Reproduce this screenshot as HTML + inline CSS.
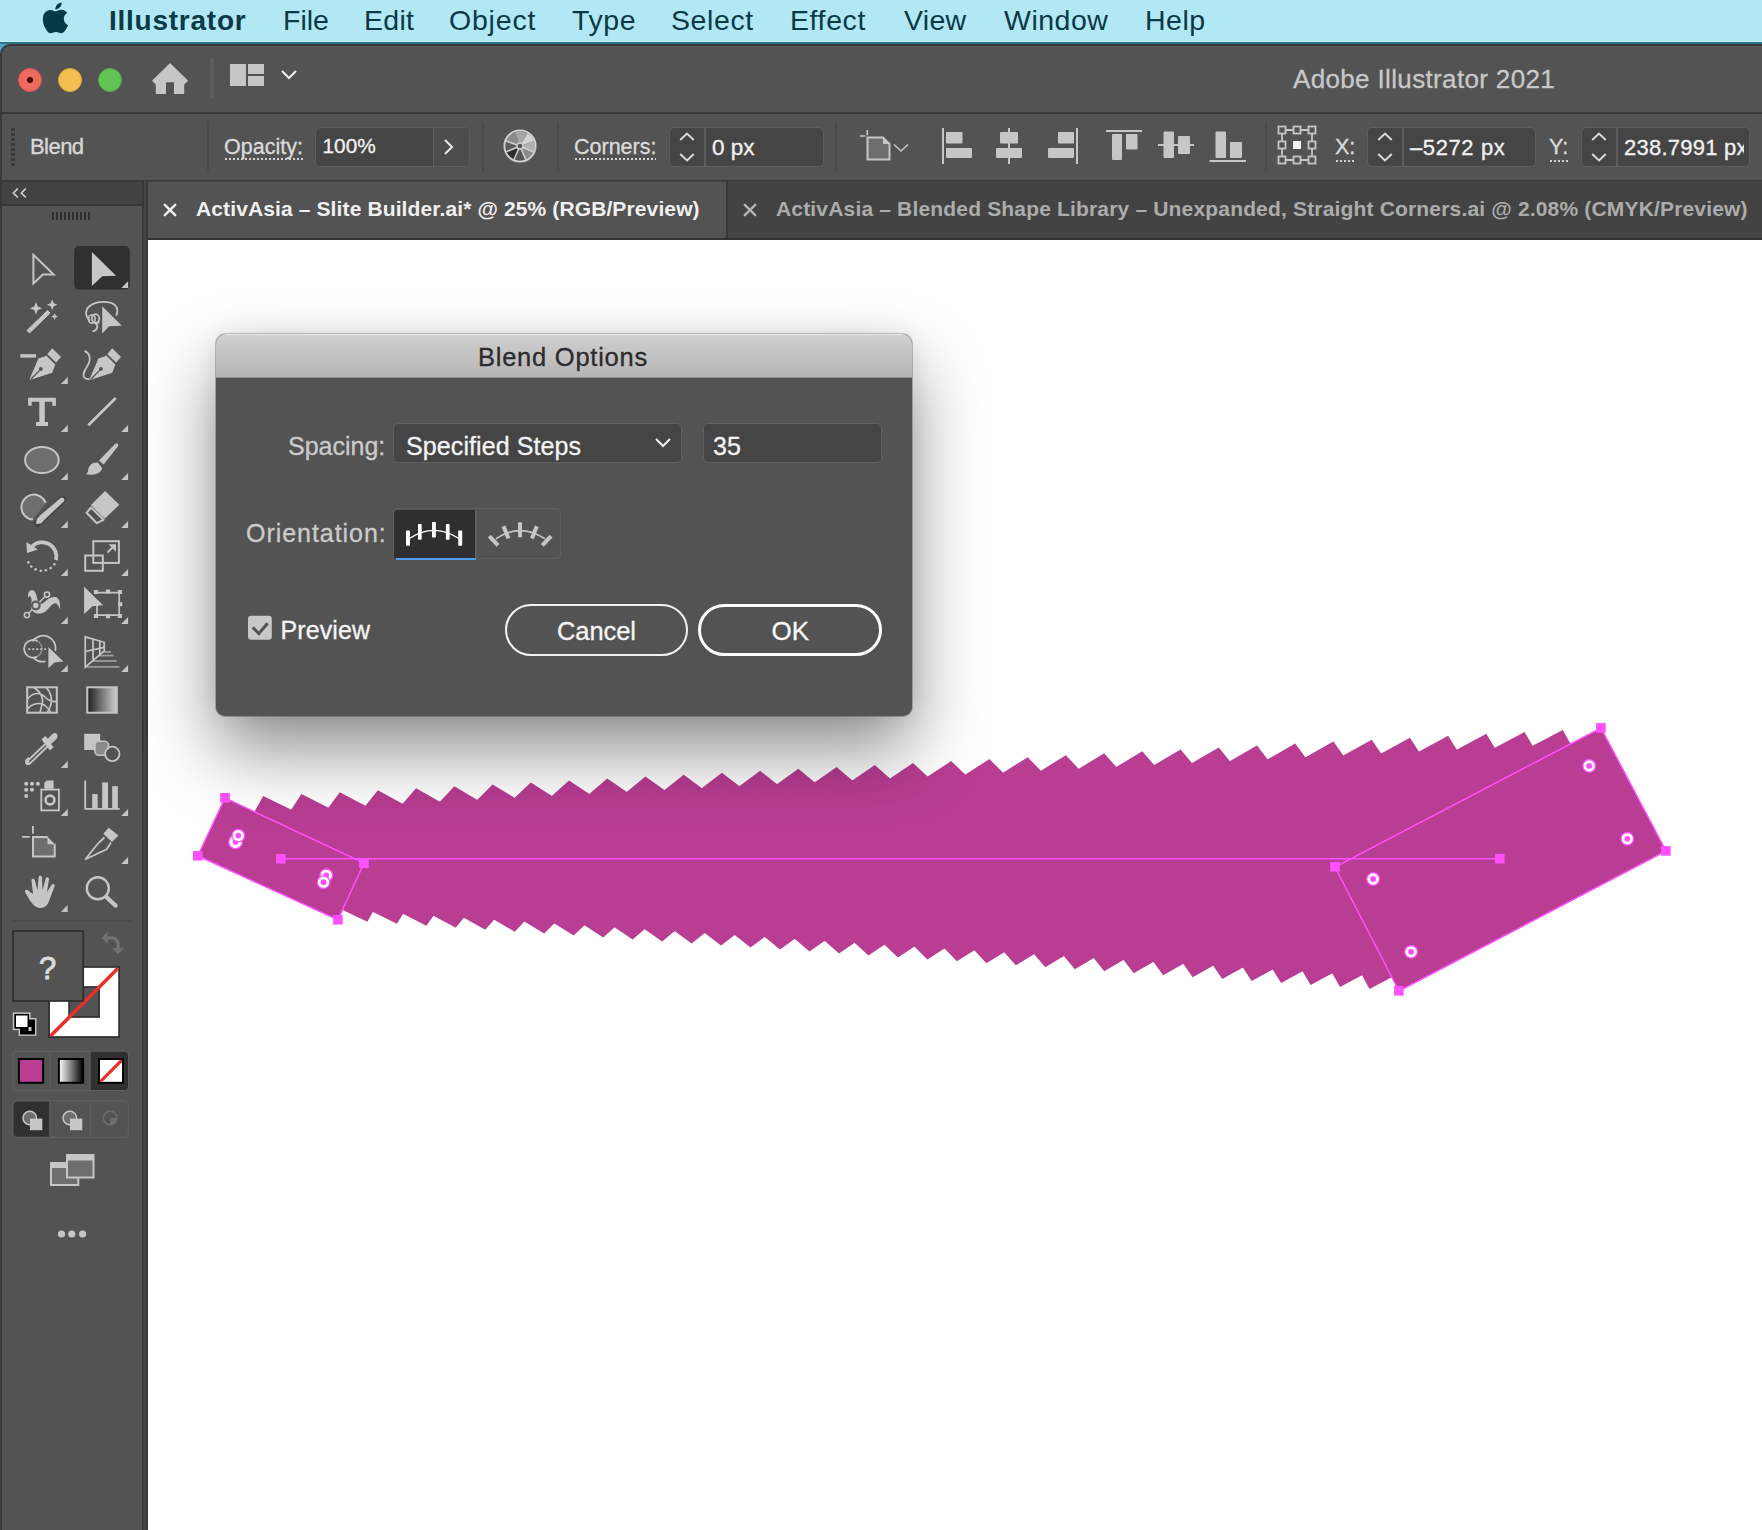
<!DOCTYPE html>
<html><head><meta charset="utf-8"><style>
*{margin:0;padding:0;box-sizing:border-box}
html,body{width:1762px;height:1530px;overflow:hidden;background:#fff;font-family:"Liberation Sans",sans-serif}
.a{position:absolute}
.t{position:absolute;white-space:pre;line-height:1}
#menubar{left:0;top:0;width:1762px;height:41px;background:#b1e8f4}
#menubar .t{color:#0b3946;font-size:28.5px;top:6px}
.lbl{color:#dcdcdc;font-size:21.5px;-webkit-text-stroke:0.3px currentColor}
.dl{position:absolute;height:2px;background:repeating-linear-gradient(90deg,#d4d4d4 0 2px,transparent 2px 4px)}
.inp{position:absolute;background:#454545;border:1.5px solid #5d5d5d;border-radius:5px}
.sep{position:absolute;width:2px;background:#4a4a4a}
</style></head><body>
<div id="menubar" class="a">
  <svg class="a" style="left:40.5px;top:2px" width="28.8" height="31.7" viewBox="1.5 -0.3 21 24.6"><path fill="#053a46" d="M12.152 6.896c-.948 0-2.415-1.078-3.96-1.04-2.04.027-3.91 1.183-4.961 3.014-2.117 3.675-.546 9.103 1.519 12.09 1.013 1.454 2.208 3.09 3.792 3.039 1.52-.065 2.09-.987 3.935-.987 1.831 0 2.35.987 3.96.948 1.637-.026 2.676-1.48 3.676-2.948 1.156-1.688 1.636-3.325 1.662-3.415-.039-.013-3.182-1.221-3.22-4.857-.026-3.04 2.48-4.494 2.597-4.559-1.429-2.09-3.623-2.324-4.39-2.376-2-.156-3.675 1.09-4.61 1.09zM15.53 3.83c.843-1.012 1.4-2.427 1.245-3.83-1.207.052-2.662.805-3.532 1.818-.78.896-1.454 2.338-1.273 3.714 1.338.104 2.715-.688 3.559-1.701"/></svg>
  <span class="t" style="left:109px;font-weight:700;font-size:28px;letter-spacing:0.75px;top:6.5px">Illustrator</span>
  <span class="t" style="left:283px">File</span>
  <span class="t" style="left:364px;letter-spacing:0.3px">Edit</span>
  <span class="t" style="left:449px;letter-spacing:0.8px">Object</span>
  <span class="t" style="left:572px;letter-spacing:0.6px">Type</span>
  <span class="t" style="left:671px;letter-spacing:0.6px">Select</span>
  <span class="t" style="left:790px;letter-spacing:0.6px">Effect</span>
  <span class="t" style="left:904px;letter-spacing:0.3px">View</span>
  <span class="t" style="left:1004px;letter-spacing:0.5px">Window</span>
  <span class="t" style="left:1145px;letter-spacing:0.5px">Help</span>
</div>
<div class="a" style="left:0;top:41px;width:1762px;height:1px;background:#bdf2fb"></div>
<div class="a" style="left:0;top:42px;width:1762px;height:2px;background:#2e7488"></div>
<div class="a" style="left:0;top:44px;width:20px;height:20px;background:#4aa6c6"></div>

<div class="a" style="left:0;top:44px;width:1762px;height:1486px;background:#3a3838;border-top-left-radius:10px"></div>
<div class="a" style="left:2px;top:46px;width:1760px;height:66px;background:#535353;border-top-left-radius:8px"></div>
<!-- traffic lights -->
<div class="a" style="left:18px;top:68px;width:24px;height:24px;border-radius:50%;background:#ec6a5f;border:1px solid #d8564b"></div>
<div class="a" style="left:27px;top:77px;width:6px;height:6px;border-radius:50%;background:#4e0202"></div>
<div class="a" style="left:58px;top:68px;width:24px;height:24px;border-radius:50%;background:#f4bf4f;border:1px solid #dca63a"></div>
<div class="a" style="left:98px;top:68px;width:24px;height:24px;border-radius:50%;background:#61c454;border:1px solid #51a940"></div>
<!-- home -->
<svg class="a" style="left:150px;top:60px" width="40" height="36" viewBox="150 60 40 36"><path fill="#c6c6c6" d="M170 63 L188.2 80.8 L184.2 84.4 L184.2 94 L174 94 L174 82.2 L166 82.2 L166 94 L155.8 94 L155.8 84.4 L152 80.8 Z"/></svg>
<div class="a" style="left:210px;top:58px;width:4px;height:40px;background:#5c5c5c"></div>
<!-- workspace icon -->
<div class="a" style="left:230px;top:64px;width:16px;height:22px;background:#c6c6c6"></div>
<div class="a" style="left:248px;top:64px;width:16px;height:10px;background:#c6c6c6"></div>
<div class="a" style="left:248px;top:76px;width:16px;height:10px;background:#c6c6c6"></div>
<svg class="a" style="left:280px;top:69px" width="18" height="12"><path d="M2 2 L9 9 L16 2" fill="none" stroke="#f0f0f0" stroke-width="2"/></svg>
<span class="t" style="left:1293px;top:66px;font-size:26px;color:#c8c8c8;letter-spacing:0.35px;-webkit-text-stroke:0.3px currentColor">Adobe Illustrator 2021</span>
<!-- control bar -->
<div class="a" style="left:2px;top:114px;width:1760px;height:66px;background:#535353"></div>
<div class="a" style="left:11px;top:128px;width:4px;height:3px;background:#3a3a3a"></div><div class="a" style="left:11px;top:133px;width:4px;height:3px;background:#3a3a3a"></div><div class="a" style="left:11px;top:138px;width:4px;height:3px;background:#3a3a3a"></div><div class="a" style="left:11px;top:143px;width:4px;height:3px;background:#3a3a3a"></div><div class="a" style="left:11px;top:148px;width:4px;height:3px;background:#3a3a3a"></div><div class="a" style="left:11px;top:153px;width:4px;height:3px;background:#3a3a3a"></div><div class="a" style="left:11px;top:158px;width:4px;height:3px;background:#3a3a3a"></div><div class="a" style="left:11px;top:163px;width:4px;height:3px;background:#3a3a3a"></div>
<span class="t lbl" style="left:30px;top:135.5px;font-size:22px;color:#d8d8d8;letter-spacing:-0.55px;-webkit-text-stroke:0.35px #d8d8d8">Blend</span>
<div class="sep" style="left:207px;top:122px;height:49px"></div>
<span class="t lbl" style="left:224px;top:137px">Opacity:</span><div class="dl" style="left:225px;top:158px;width:78px"></div>
<div class="inp" style="left:315px;top:127px;width:155px;height:40px"></div>
<div class="a" style="left:433px;top:128px;width:36px;height:38px;background:#4d4d4d;border-left:1.5px solid #5d5d5d;border-radius:0 4px 4px 0"></div>
<span class="t" style="-webkit-text-stroke:0.3px currentColor;left:322.5px;top:136px;font-size:20.8px;color:#f2f2f2">100%</span>
<svg class="a" style="left:440px;top:137px" width="16" height="20"><path d="M5 3 L12 10 L5 17" fill="none" stroke="#e8e8e8" stroke-width="2"/></svg>
<div class="sep" style="left:482px;top:122px;height:49px"></div>
<svg class="a" style="left:500px;top:126px" width="40" height="40" viewBox="-20 -20 40 40"><path d="M0 0 L13.52 6.02 A14.8 14.8 0 0 1 5.78 13.62 Z" fill="#8a8a8a"/><path d="M0 0 L5.78 13.62 A14.8 14.8 0 0 1 -6.02 13.52 Z" fill="#575757"/><path d="M0 0 L-6.02 13.52 A14.8 14.8 0 0 1 -13.62 5.78 Z" fill="#2c2c2c"/><path d="M0 0 L-13.62 5.78 A14.8 14.8 0 0 1 -13.91 -5.06 Z" fill="#5c5c5c"/><path d="M0 0 L-13.91 -5.06 A14.8 14.8 0 0 1 -5.06 -13.91 Z" fill="#8c8c8c"/><path d="M0 0 L-5.06 -13.91 A14.8 14.8 0 0 1 7.40 -12.82 Z" fill="#a6a6a6"/><path d="M0 0 L7.40 -12.82 A14.8 14.8 0 0 1 13.91 -5.06 Z" fill="#d2d2d2"/><path d="M0 0 L13.91 -5.06 A14.8 14.8 0 0 1 13.52 6.02 Z" fill="#b0b0b0"/><path d="M0 0 L13.52 6.02 M0 0 L5.78 13.62 M0 0 L-6.02 13.52 M0 0 L-13.62 5.78 M0 0 L-13.91 -5.06 " stroke="#cfcfcf" stroke-width="1.5"/><circle r="15.6" fill="none" stroke="#d0d0d0" stroke-width="1.9"/><circle r="3.1" fill="#555" stroke="#d0d0d0" stroke-width="1.5"/></svg>
<div class="sep" style="left:557px;top:122px;height:49px"></div>
<span class="t lbl" style="left:574px;top:137px">Corners:</span><div class="dl" style="left:575px;top:158px;width:81px"></div>
<div class="inp" style="left:669px;top:127px;width:155px;height:40px"></div>
<div class="a" style="left:704px;top:128px;width:1.5px;height:38px;background:#5d5d5d"></div>
<svg class="a" style="left:675px;top:130px" width="24" height="34"><path d="M5.2 10 L12 3.6 L18.8 10 M5.2 24 L12 30.4 L18.8 24" fill="none" stroke="#dcdcdc" stroke-width="1.9"/></svg>
<span class="t" style="-webkit-text-stroke:0.3px currentColor;left:712px;top:137px;font-size:22.5px;color:#f2f2f2">0 px</span>
<div class="sep" style="left:835px;top:122px;height:49px"></div>
<svg class="a" style="left:856px;top:127px" width="56" height="36" viewBox="856 127 56 36">
 <path d="M859.8 136 H865.2 M867.3 130 V135.5" stroke="#c6c6c6" stroke-width="1.6"/>
 <path d="M867.5 137.5 L883 137.5 L889.5 144 L889.5 159.5 L867.5 159.5 Z" fill="#6e6e6e" stroke="#c6c6c6" stroke-width="2"/>
 <path d="M883 137.5 L883 144 L889.5 144" fill="#c6c6c6"/>
 <path d="M894 144.5 L901 151 L908 144.5" fill="none" stroke="#c6c6c6" stroke-width="1.6"/>
</svg>
<svg class="a" style="left:930px;top:120px" width="330" height="50" viewBox="930 120 330 50" fill="#c6c6c6">
 <rect x="942" y="128" width="2" height="36"/><rect x="946" y="132" width="16.5" height="11.5" rx="1"/><rect x="946" y="148" width="26" height="10" rx="1"/>
 <rect x="1008" y="128" width="2" height="36"/><rect x="1000" y="132" width="18" height="11.5" rx="1"/><rect x="996" y="148" width="26" height="10" rx="1"/>
 <rect x="1076" y="128" width="2" height="36"/><rect x="1058" y="132" width="16" height="11.5" rx="1"/><rect x="1048" y="148" width="26" height="10" rx="1"/>
 <rect x="1106" y="130" width="36" height="2"/><rect x="1112" y="134" width="10" height="26" rx="1"/><rect x="1126" y="134" width="11.5" height="15.5" rx="1"/>
 <rect x="1158" y="144" width="36" height="2"/><rect x="1163.5" y="131.5" width="10.5" height="26.5" rx="1"/><rect x="1178" y="136" width="12" height="18" rx="1"/>
 <rect x="1209.5" y="160" width="36.5" height="2"/><rect x="1215.5" y="131.5" width="10.5" height="26.5" rx="1"/><rect x="1230" y="142" width="12" height="16" rx="1"/>
</svg>
<div class="sep" style="left:1265px;top:122px;height:49px"></div>
<svg class="a" style="left:1274px;top:122px" width="46" height="46" viewBox="1274 122 46 46">
 <g fill="none" stroke="#c6c6c6" stroke-width="1.8">
  <rect x="1278.5" y="126.5" width="7" height="7"/><rect x="1293.5" y="126.5" width="7" height="7"/><rect x="1308.5" y="126.5" width="7" height="7"/>
  <rect x="1278.5" y="141.5" width="7" height="7"/><rect x="1308.5" y="141.5" width="7" height="7"/>
  <rect x="1278.5" y="156.5" width="7" height="7"/><rect x="1293.5" y="156.5" width="7" height="7"/><rect x="1308.5" y="156.5" width="7" height="7"/>
  <path d="M1285.5 130 H1293.5 M1300.5 130 H1308.5 M1285.5 160 H1293.5 M1300.5 160 H1308.5 M1282 133.5 V141.5 M1282 148.5 V156.5 M1312 133.5 V141.5 M1312 148.5 V156.5"/>
 </g>
 <rect x="1293" y="141" width="8" height="8" fill="#f0f0f0"/>
</svg>
<span class="t lbl" style="left:1335px;top:137px">X:</span><div class="dl" style="left:1336px;top:160px;width:18px"></div>
<div class="inp" style="left:1367px;top:127px;width:169px;height:40px"></div>
<div class="a" style="left:1402px;top:128px;width:1.5px;height:38px;background:#5d5d5d"></div>
<svg class="a" style="left:1372.5px;top:130px" width="24" height="34"><path d="M5.2 10 L12 3.6 L18.8 10 M5.2 24 L12 30.4 L18.8 24" fill="none" stroke="#dcdcdc" stroke-width="1.9"/></svg>
<span class="t" style="-webkit-text-stroke:0.3px currentColor;left:1410px;top:137px;font-size:22px;letter-spacing:0.6px;color:#f2f2f2">–5272 px</span>
<span class="t lbl" style="left:1549px;top:137px">Y:</span><div class="dl" style="left:1550px;top:160px;width:18px"></div>
<div class="inp" style="left:1581px;top:127px;width:169px;height:40px"></div>
<div class="a" style="left:1616px;top:128px;width:1.5px;height:38px;background:#5d5d5d"></div>
<svg class="a" style="left:1586.5px;top:130px" width="24" height="34"><path d="M5.2 10 L12 3.6 L18.8 10 M5.2 24 L12 30.4 L18.8 24" fill="none" stroke="#dcdcdc" stroke-width="1.9"/></svg>
<div class="a" style="left:1620px;top:128px;width:124px;height:38px;overflow:hidden"><span class="t" style="-webkit-text-stroke:0.3px currentColor;left:4px;top:9px;font-size:22px;letter-spacing:0.25px;color:#f2f2f2">238.7991 px</span></div>

<!-- left panel -->
<div class="a" style="left:2px;top:182px;width:140px;height:22px;background:#434343"></div>
<svg class="a" style="left:0;top:180px" width="30" height="24" viewBox="0 180 30 24"><path d="M17.8 188.6 L13.3 193 L17.8 197.4 M25.8 188.6 L21.3 193 L25.8 197.4" fill="none" stroke="#d0d0d0" stroke-width="1.6"/></svg>
<div class="a" style="left:2px;top:206px;width:140px;height:1324px;background:#535353"></div>
<div class="a" style="left:52px;top:212px;width:38px;height:8px;background:repeating-linear-gradient(90deg,#2e2e2e 0 2px,transparent 2px 4px)"></div>
<div class="a" style="left:12px;top:920px;width:120px;height:1.5px;background:#4a4a4a"></div>
<svg class="a" style="left:0;top:0" width="148" height="1260" viewBox="0 0 148 1260">
<path d="M33.4 254.8 L33.4 283.4 L42.9 274.5 L53.6 274.5 Z" fill="none" stroke="#c6c6c6" stroke-width="2" stroke-linejoin="miter"/>
<rect x="74.2" y="246.1" width="55.6" height="43.4" rx="4.5" fill="#303030"/>
<path d="M91.9 252 L91.9 286.1 L102.2 276.3 L116.1 275.8 Z" fill="#c6c6c6"/>
<path d="M128.1 281.2 L128.1 288 L121.3 288 Z" fill="#c6c6c6"/>
<path d="M29.5 333 L27 330.4 L47.5 310.5 L50 313.1 Z" fill="#c6c6c6" stroke="#c6c6c6" stroke-width="1" stroke-linejoin="round"/>
<polygon points="36.00,302.10 37.75,306.55 42.20,308.30 37.75,310.05 36.00,314.50 34.25,310.05 29.80,308.30 34.25,306.55" fill="#c6c6c6"/>
<polygon points="52.20,299.30 53.73,303.17 57.60,304.70 53.73,306.23 52.20,310.10 50.67,306.23 46.80,304.70 50.67,303.17" fill="#c6c6c6"/>
<polygon points="54.60,312.90 55.62,315.48 58.20,316.50 55.62,317.52 54.60,320.10 53.58,317.52 51.00,316.50 53.58,315.48" fill="#c6c6c6"/>
<path d="M102.2 306.2 L102.2 333.6 L109 326.3 L121.8 325.8 Z" fill="#c6c6c6"/>
<path d="M116.2 315.6 C119 309.5 117 303.5 107.5 302.2 C98 301 89.5 304 86.8 309.5 C85 314 87 318.5 90 320.5 M95.2 323 C98.8 325.5 97.8 330.2 92.4 331.3 M94 322.7 H99.6" fill="none" stroke="#c6c6c6" stroke-width="1.8"/><ellipse cx="91.8" cy="319" rx="3.3" ry="4.2" fill="none" stroke="#c6c6c6" stroke-width="1.7"/><ellipse cx="95.6" cy="318.6" rx="3.7" ry="4.4" fill="none" stroke="#c6c6c6" stroke-width="1.7"/>
<rect x="20.3" y="354.2" width="15.7" height="3.4" fill="#c6c6c6"/>
<g transform="translate(0,0)">
<path d="M47.3 354.2 L52.2 348.3 L61 357.1 L56.1 362.5 Z" fill="#c6c6c6"/>
<path d="M38.4 358.6 L46.5 355.8 L55.3 364.5 L52.2 372.8 L31.5 379.5 Q29.5 379.8 30 378 Z" fill="#c6c6c6"/>
<circle cx="40.9" cy="368.9" r="1.9" fill="#535353"/>
<path d="M40.4 369.6 L31 379" stroke="#535353" stroke-width="1.3"/>
</g>
<path d="M67.8 377 L67.8 384 L60.8 384 Z" fill="#c6c6c6"/>
<g transform="translate(60,0)">
<path d="M47.3 354.2 L52.2 348.3 L61 357.1 L56.1 362.5 Z" fill="#c6c6c6"/>
<path d="M38.4 358.6 L46.5 355.8 L55.3 364.5 L52.2 372.8 L31.5 379.5 Q29.5 379.8 30 378 Z" fill="#c6c6c6"/>
<circle cx="40.9" cy="368.9" r="1.9" fill="#535353"/>
<path d="M40.4 369.6 L31 379" stroke="#535353" stroke-width="1.3"/>
</g>
<path d="M84.5 350.8 C90 353 91 359 88.5 364 C85 370 82 374 84 377 C85.5 379 88 379.3 89.6 379.2" fill="none" stroke="#c6c6c6" stroke-width="1.8"/>
<path d="M28.1 397.7 H55.9 V405.8 H52.3 V401.8 H44.8 V422 H48 V426 H36 V422 H39.3 V401.8 H31.7 V405.8 H28.1 Z" fill="#c6c6c6"/>
<path d="M67.8 425 L67.8 432 L60.8 432 Z" fill="#c6c6c6"/>
<path d="M89.3 424.3 L114.8 399.1" stroke="#c6c6c6" stroke-width="2.8" stroke-linecap="square"/>
<path d="M128.1 425 L128.1 432 L121.1 432 Z" fill="#c6c6c6"/>
<ellipse cx="41.9" cy="460" rx="16.8" ry="13" fill="#6e6e6e" stroke="#c6c6c6" stroke-width="2"/>
<path d="M67.8 473 L67.8 480 L60.8 480 Z" fill="#c6c6c6"/>
<path d="M99 460.6 L114.8 444.2 Q118.5 441.5 118.2 446 L103.6 464.6 Z" fill="#c6c6c6"/>
<path d="M97.8 462.6 C92.5 462 88.8 465.5 88.3 469.5 C88 472 87 473.5 86 474.3 C92 475.5 100.5 474.5 102.2 468.2 Z" fill="#c6c6c6"/>
<path d="M128.1 473 L128.1 480 L121.1 480 Z" fill="#c6c6c6"/>
<path d="M45.7 503 A12.5 12.5 0 1 0 33 519.6" fill="#6e6e6e" stroke="#c6c6c6" stroke-width="2"/>
<path d="M33 519.6 L45.7 503 L36 503 Z" fill="#6e6e6e"/>
<path d="M62.5 499.6 L37.5 523.2" stroke="#444" stroke-width="7.5" stroke-linecap="round"/>
<path d="M61.2 497.6 Q64.8 497.8 64.3 501 L45 519.2 L41 523.5 L36 524 L36.8 519.3 L40.5 515 Z" fill="#c6c6c6"/>
<path d="M67.8 521 L67.8 528 L60.8 528 Z" fill="#c6c6c6"/>
<path d="M105.1 490.9 L119.3 504.8 L104.6 518.8 L90.9 505.1 Z" fill="#c6c6c6"/>
<path d="M91 507.5 L103.5 519.8 L96.8 523.2 L86.6 512.8 Z" fill="none" stroke="#c6c6c6" stroke-width="2" stroke-linejoin="round"/>
<path d="M128.1 521 L128.1 528 L121.1 528 Z" fill="#c6c6c6"/>
<path d="M56 560 A14.3 14.3 0 0 0 32.2 546.3" fill="none" stroke="#c6c6c6" stroke-width="3.8"/>
<path d="M26.3 542.1 L27.1 552.9 L37.9 549.6 Z" fill="#c6c6c6"/>
<circle cx="28.4" cy="562.4" r="1.3" fill="#c6c6c6"/>
<circle cx="31.3" cy="566.5" r="1.3" fill="#c6c6c6"/>
<circle cx="35.6" cy="569.4" r="1.3" fill="#c6c6c6"/>
<circle cx="40.7" cy="570.7" r="1.3" fill="#c6c6c6"/>
<circle cx="45.9" cy="570.3" r="1.3" fill="#c6c6c6"/>
<circle cx="50.7" cy="568.1" r="1.3" fill="#c6c6c6"/>
<circle cx="54.3" cy="564.3" r="1.3" fill="#c6c6c6"/>
<path d="M67.8 569 L67.8 576 L60.8 576 Z" fill="#c6c6c6"/>
<rect x="93.3" y="541.2" width="25.6" height="21.7" fill="none" stroke="#c6c6c6" stroke-width="2"/>
<rect x="85.2" y="555.5" width="17.6" height="15.3" fill="none" stroke="#c6c6c6" stroke-width="2"/>
<path d="M107.5 552.5 L114 546" stroke="#c6c6c6" stroke-width="1.8"/><path d="M108.5 544.3 L116 544.3 L116 551.8 Z" fill="#c6c6c6"/>
<path d="M128.1 569 L128.1 576 L121.1 576 Z" fill="#c6c6c6"/>
<path d="M28.3 597.7 C27 592 30 589.5 33 590.3 C35.5 591 36.5 595 37.5 599.5 C38.5 603.5 41 605 44 602.5 C47.5 599 51 596.5 55 597 C59 597.5 60.5 602 60 609.3 C58.5 605.5 57 602.5 54.5 603.3 C51.5 604.5 49 608.5 46 611 C42.5 614 37 614.2 34.5 612.5 C31 610 30 606 31.5 602.5 C32 601 31.5 598.5 30.5 596.5 C29.5 595.5 29 596.5 28.3 597.7 Z" fill="#c6c6c6"/>
<path d="M27.9 614.1 L46 595.6" stroke="#c6c6c6" stroke-width="1.5"/>
<circle cx="26.9" cy="615.1" r="2.6" fill="#535353" stroke="#c6c6c6" stroke-width="1.6"/>
<circle cx="47" cy="594.6" r="2.6" fill="#535353" stroke="#c6c6c6" stroke-width="1.6"/>
<circle cx="35.8" cy="605.5" r="3.8" fill="#c6c6c6" stroke="#5a5a5a" stroke-width="2.2"/>
<path d="M67.8 617 L67.8 624 L60.8 624 Z" fill="#c6c6c6"/>
<path d="M97 592.6 H119.2 V615.1 H97 V605" fill="none" stroke="#c6c6c6" stroke-width="1.7"/>
<rect x="93.9" y="589.9" width="4.2" height="4" rx="0.6" fill="#c6c6c6"/>
<rect x="105.9" y="589.6" width="4.2" height="4" rx="0.6" fill="#c6c6c6"/>
<rect x="117.80000000000001" y="589.9" width="4.2" height="4" rx="0.6" fill="#c6c6c6"/>
<rect x="118.10000000000001" y="602.2" width="4.2" height="4" rx="0.6" fill="#c6c6c6"/>
<rect x="93.9" y="614.1" width="4.2" height="4" rx="0.6" fill="#c6c6c6"/>
<rect x="105.9" y="614.3" width="4.2" height="4" rx="0.6" fill="#c6c6c6"/>
<rect x="117.80000000000001" y="614.1" width="4.2" height="4" rx="0.6" fill="#c6c6c6"/>
<path d="M84.1 586.8 L84.1 614.1 L92.6 606.2 L103.2 605.2 Z" fill="#c6c6c6"/>
<path d="M128.1 617 L128.1 624 L121.1 624 Z" fill="#c6c6c6"/>
<path d="M32.5 641.5 A12.6 12.6 0 0 1 55.4 651" fill="none" stroke="#c6c6c6" stroke-width="1.8"/>
<path d="M33.2 657.3 A12.6 12.6 0 0 0 45.5 661.3" fill="none" stroke="#c6c6c6" stroke-width="1.8"/>
<path d="M37.45 641.1 A8.9 8.9 0 1 0 37.45 656.5" fill="none" stroke="#c6c6c6" stroke-width="1.8"/>
<path d="M37.45 641.1 A8.9 8.9 0 0 1 37.45 656.5" fill="none" stroke="#8a8a8a" stroke-width="1.6"/>
<path d="M28.3 649.1 H46" stroke="#c6c6c6" stroke-width="1.8" stroke-dasharray="2 2"/>
<path d="M48.4 647.1 L48.4 668.2 L54.5 662.4 L63.4 661.4 Z" fill="#c6c6c6"/>
<path d="M67.8 665 L67.8 672 L60.8 672 Z" fill="#c6c6c6"/>
<path d="M102.9 651.9 H111" stroke="#9a9a9a" stroke-width="1.8"/>
<path d="M98.6 655.6 H113.8" stroke="#9a9a9a" stroke-width="1.8"/>
<path d="M92.4 661 H116.8" stroke="#9a9a9a" stroke-width="1.8"/>
<path d="M85.7 666.8 H119.5" stroke="#9a9a9a" stroke-width="1.8"/>
<path d="M85.2 636.9 L104.2 642.3 L104.2 650.8 L85.2 667.2 Z M85.2 651.5 L104.2 647.4 M93 639.3 V659.5 M99.8 641 V654.5" fill="none" stroke="#c6c6c6" stroke-width="1.7" stroke-linejoin="miter"/>
<path d="M128.1 665 L128.1 672 L121.1 672 Z" fill="#c6c6c6"/>
<rect x="27.2" y="687.3" width="29.6" height="25.4" fill="none" stroke="#c6c6c6" stroke-width="2"/>
<path d="M27.5 699 C33 692 40 692 45 697 C49 701 53 702 56.5 701.5 M27.5 709 C32 703 40 702 45 705.5 C48 708 50 711 51 712.5 M34 687.5 C41 692 44 699 42 705 C41 709 40 711 40 712.5 M46 687.5 C51 692 53 700 50 707 C49 709 48 711 47.5 712.5" fill="none" stroke="#c6c6c6" stroke-width="1.6"/>
<defs><linearGradient id="gtool" x1="0" x2="1"><stop offset="0" stop-color="#1e1e1e"/><stop offset="1" stop-color="#d0d0d0"/></linearGradient><linearGradient id="gsw" x1="0" x2="1"><stop offset="0" stop-color="#ffffff"/><stop offset="1" stop-color="#000000"/></linearGradient></defs>
<rect x="87.3" y="687.3" width="29.5" height="25.4" fill="url(#gtool)" stroke="#c6c6c6" stroke-width="2"/>
<path d="M48 741.5 L28.5 760 C25.5 763 27 765.5 30 763.5 L50 744" fill="none" stroke="#c6c6c6" stroke-width="1.8" stroke-linejoin="round"/>
<path d="M28 758.5 C25 761 25.5 764.5 28.5 764 Z" fill="none" stroke="#c6c6c6" stroke-width="1.8"/>
<path d="M41.5 739.5 L45 736 L48 738.5 L52.5 734 C54.5 732 57.5 733 57.5 736 C57.5 737.5 57 738.5 55.5 740 L51 744 L53.5 747 L50 750.5 Z" fill="#c6c6c6"/>
<path d="M67.8 761 L67.8 768 L60.8 768 Z" fill="#c6c6c6"/>
<rect x="84.2" y="733.8" width="16" height="16.2" fill="#c6c6c6"/>
<rect x="94.9" y="741.3" width="13.6" height="14" rx="4" fill="#8a8a8a" stroke="#c6c6c6" stroke-width="1.6"/>
<circle cx="112.3" cy="753.9" r="7.2" fill="#535353" stroke="#c6c6c6" stroke-width="1.8"/>
<circle cx="26.2" cy="783.8" r="2" fill="#c6c6c6"/>
<circle cx="32" cy="783.8" r="2" fill="#c6c6c6"/>
<circle cx="37.9" cy="783.8" r="2" fill="#c6c6c6"/>
<circle cx="26.2" cy="789.7" r="2" fill="#c6c6c6"/>
<circle cx="32" cy="789.7" r="2" fill="#c6c6c6"/>
<circle cx="26.2" cy="796.1" r="2" fill="#c6c6c6"/>
<rect x="41.3" y="789.6" width="17.6" height="20.8" fill="none" stroke="#c6c6c6" stroke-width="1.8"/>
<path d="M44.3 782 H46 V780.4 H53.6 V788.7 H44.3 Z" fill="#c6c6c6"/>
<circle cx="50" cy="800" r="4.4" fill="none" stroke="#c6c6c6" stroke-width="2.6"/>
<path d="M67.8 809 L67.8 816 L60.8 816 Z" fill="#c6c6c6"/>
<path d="M85.2 780.4 V808.8 H119.8" fill="none" stroke="#c6c6c6" stroke-width="1.8"/>
<rect x="92.2" y="794.1" width="5.5" height="14.7" fill="#c6c6c6"/><rect x="102.2" y="782.4" width="5.8" height="26.4" fill="#c6c6c6"/><rect x="112.2" y="786.1" width="5.6" height="22.7" fill="#c6c6c6"/>
<path d="M128.1 809 L128.1 816 L121.1 816 Z" fill="#c6c6c6"/>
<path d="M32.9 826 V833.7 M21.9 836.9 H29.7" stroke="#c6c6c6" stroke-width="1.8"/>
<path d="M33 837 H47.5 L54.7 844.2 V856.5 H33 Z" fill="#6e6e6e" stroke="#c6c6c6" stroke-width="2"/>
<path d="M47 836.5 L55.2 844.7 L55.2 836.5 Z" fill="#535353"/><path d="M47.5 837 L54.7 844.2 L47.5 844.2 Z" fill="#c6c6c6"/>
<path d="M103.3 833.7 L108.8 827.8 L118.4 835.6 L112 842 Z" fill="#c6c6c6"/>
<path d="M104.5 837.5 L99.5 842 C94 848 89 855 85.5 859 C91 857 98 853 106.5 849.5 L111 842.5" fill="none" stroke="#c6c6c6" stroke-width="1.8" stroke-linejoin="round"/>
<path d="M128.1 857 L128.1 864 L121.1 864 Z" fill="#c6c6c6"/>
<path d="M34.8 906 C31 903 28 897 25.5 893 C24 891 25.5 889 27.5 890 L33 894 L31.5 881 C31 878.5 34.5 878 35 880.5 L37.5 890.5 L38.5 877.5 C38.5 875 42 875 42 877.5 L42.5 890.5 L45.5 879 C46 876.5 49.5 877 49 879.5 L47 892 L51.5 885 C52.5 883 55.5 884 54.5 886.5 L50 898.5 C48.5 903.5 46 908 40.5 908 C38 908 36.5 907.3 34.8 906 Z" fill="#c6c6c6"/>
<path d="M67.6 905 L67.6 912 L61 912 Z" fill="#c6c6c6"/>
<circle cx="97.8" cy="888.3" r="11" fill="none" stroke="#c6c6c6" stroke-width="2.4"/>
<path d="M106.3 897 L115.5 905.5" stroke="#c6c6c6" stroke-width="4.4" stroke-linecap="round"/>
<rect x="12.3" y="920" width="119.4" height="1.5" fill="#4b4b4b"/>
<rect x="49.1" y="967" width="70" height="70" fill="#fff" stroke="#2e2e2e" stroke-width="1.7"/>
<rect x="69.1" y="987" width="30" height="30" fill="#535353" stroke="#2e2e2e" stroke-width="1.7"/>
<defs><clipPath id="cpst"><rect x="49.9" y="967.8" width="68.4" height="68.4"/></clipPath><clipPath id="cpsw"><rect x="100" y="1060" width="22" height="21.8"/></clipPath></defs><path d="M47 1039.5 L121.3 965" stroke="#e8302a" stroke-width="3.6" clip-path="url(#cpst)"/>
<rect x="13" y="931" width="70.2" height="70" fill="#535353" stroke="#2e2e2e" stroke-width="1.7"/>
<text x="47.6" y="978.5" font-family="Liberation Sans" font-size="31" fill="#dadada" stroke="#dadada" stroke-width="0.9" text-anchor="middle">?</text>
<path d="M101.8 937.8 L107.5 931.8 L107.8 944 Z M112 948.3 L124 948.3 L118.1 954.3 Z" fill="#727272"/><path d="M106 937.8 H111.5 C115.5 937.8 118.2 940.5 118.2 944.5 V949" fill="none" stroke="#727272" stroke-width="3.3"/>
<rect x="12.8" y="1012.4" width="17.8" height="17.8" fill="#c8c8c8"/><rect x="18.6" y="1018" width="17.8" height="17.8" fill="#c8c8c8"/>
<rect x="20" y="1019.5" width="15" height="15" fill="#000"/><rect x="14.3" y="1013.9" width="14.8" height="14.8" fill="#000"/><rect x="16" y="1015.5" width="11.5" height="11.5" fill="#fff"/>
<rect x="28.5" y="1027" width="3" height="4" fill="#c8c8c8"/>
<rect x="13" y="1051.3" width="115.4" height="39.2" rx="4" fill="#535353" stroke="#5f5f5f" stroke-width="1.3"/>
<path d="M90.2 1051.8 H124.6 Q128 1051.8 128 1055.5 V1086.5 Q128 1090 124.6 1090 H90.2 Z" fill="#303030"/>
<path d="M49.9 1051.5 V1090.5 M89.9 1051.5 V1090.5" stroke="#5f5f5f" stroke-width="1.3"/>
<rect x="18.9" y="1059" width="24.2" height="23.8" fill="#b83d93" stroke="#000" stroke-width="2"/>
<rect x="58.9" y="1059" width="24.2" height="23.8" fill="url(#gsw)" stroke="#000" stroke-width="2"/>
<rect x="99" y="1059" width="24" height="23.8" fill="#fff" stroke="#000" stroke-width="2"/>
<path d="M98 1084 L124 1058" stroke="#e8302a" stroke-width="3.2" clip-path="url(#cpsw)"/>
<rect x="13" y="1100.9" width="115.4" height="36.4" rx="4" fill="#535353" stroke="#5f5f5f" stroke-width="1.3"/>
<path d="M49.9 1101.5 H17 Q13.6 1101.5 13.6 1105 V1133.3 Q13.6 1136.7 17 1136.7 H49.9 Z" fill="#303030"/>
<path d="M49.9 1101.5 V1136.7 M90.5 1101.5 V1136.7" stroke="#5f5f5f" stroke-width="1.3"/>
<circle cx="29.8" cy="1118" r="6.8" fill="#6e6e6e" stroke="#c6c6c6" stroke-width="1.5"/>
<rect x="30" y="1118.6" width="12.3" height="11.6" fill="#c6c6c6"/>
<circle cx="69.8" cy="1118" r="6.8" fill="#6e6e6e" stroke="#c6c6c6" stroke-width="1.5"/>
<rect x="70" y="1118.6" width="12.3" height="11.6" fill="#c6c6c6"/>
<circle cx="110.2" cy="1118" r="6.8" fill="none" stroke="#6e6e6e" stroke-width="1.5"/><path d="M110.2 1118 H117 A6.8 6.8 0 0 1 110.2 1124.8 Z" fill="#6e6e6e"/>
<rect x="51" y="1163" width="27.3" height="22" fill="#6e6e6e" stroke="#c6c6c6" stroke-width="2"/>
<rect x="51" y="1163" width="27.3" height="5" fill="#c6c6c6"/>
<rect x="67" y="1155" width="26.5" height="22.5" fill="#6e6e6e" stroke="#c6c6c6" stroke-width="2"/>
<rect x="67" y="1155" width="26.5" height="5.5" fill="#c6c6c6"/>
<circle cx="61.5" cy="1234" r="3.6" fill="#c6c6c6"/>
<circle cx="71.8" cy="1234" r="3.6" fill="#c6c6c6"/>
<circle cx="82.6" cy="1234" r="3.6" fill="#c6c6c6"/>
</svg>
<div class="a" style="left:148px;top:181px;width:1614px;height:57px;background:#434343"></div>
<div class="a" style="left:148px;top:182px;width:578px;height:56px;background:#535353"></div><div class="a" style="left:726px;top:181px;width:2px;height:57px;background:#383838"></div>
<svg class="a" style="left:162px;top:202px" width="16" height="16"><path d="M2.8 2.8 L13.2 13.2 M13.2 2.8 L2.8 13.2" stroke="#efefef" stroke-width="2.4" stroke-linecap="round"/></svg>
<span class="t" style="left:196px;top:198px;font-weight:700;font-size:21px;color:#f0f0f0;letter-spacing:0.12px">ActivAsia – Slite Builder.ai* @ 25% (RGB/Preview)</span>
<svg class="a" style="left:742px;top:202px" width="16" height="16"><path d="M2.8 2.8 L13.2 13.2 M13.2 2.8 L2.8 13.2" stroke="#b4b4b4" stroke-width="2.4" stroke-linecap="round"/></svg>
<span class="t" style="left:776px;top:198px;font-weight:700;font-size:21px;color:#acacac;letter-spacing:0.17px">ActivAsia – Blended Shape Library – Unexpanded, Straight Corners.ai @ 2.08% (CMYK/Preview)</span>
<div class="a" style="left:148px;top:237.5px;width:1614px;height:2.5px;background:#333"></div><div class="a" style="left:144px;top:181px;width:2px;height:1349px;background:#444"></div>

<div class="a" style="left:148px;top:240px;width:1614px;height:1290px;background:#fff"></div>
<svg class="a" style="left:0;top:0" width="1762" height="1530" viewBox="0 0 1762 1530">
<g fill="#b83d93">
<polygon points="225.0,798.0 364.0,863.0 337.9,919.8 197.8,855.8"/>
<polygon points="263.2,796.1 400.2,862.7 367.4,921.8 229.4,856.1"/>
<polygon points="301.4,794.1 436.3,862.3 396.8,923.8 261.0,856.4"/>
<polygon points="339.7,792.2 472.5,862.0 426.3,925.7 292.6,856.7"/>
<polygon points="377.9,790.2 508.7,861.7 455.8,927.7 324.2,857.0"/>
<polygon points="416.1,788.3 544.8,861.3 485.3,929.7 355.7,857.4"/>
<polygon points="454.3,786.3 581.0,861.0 514.8,931.7 387.3,857.7"/>
<polygon points="492.6,784.4 617.2,860.7 544.2,933.6 418.9,858.0"/>
<polygon points="530.8,782.4 653.3,860.3 573.7,935.6 450.5,858.3"/>
<polygon points="569.0,780.5 689.5,860.0 603.2,937.6 482.1,858.6"/>
<polygon points="607.2,778.6 725.7,859.7 632.6,939.6 513.7,858.9"/>
<polygon points="645.4,776.6 761.8,859.3 662.1,941.6 545.3,859.2"/>
<polygon points="683.7,774.7 798.0,859.0 691.6,943.5 576.9,859.5"/>
<polygon points="721.9,772.7 834.2,858.7 721.1,945.5 608.5,859.8"/>
<polygon points="760.1,770.8 870.3,858.3 750.5,947.5 640.0,860.2"/>
<polygon points="798.3,768.8 906.5,858.0 780.0,949.5 671.6,860.5"/>
<polygon points="836.6,766.9 942.7,857.7 809.5,951.4 703.2,860.8"/>
<polygon points="874.8,764.9 978.8,857.3 839.0,953.4 734.8,861.1"/>
<polygon points="913.0,763.0 1015.0,857.0 868.4,955.4 766.4,861.4"/>
<polygon points="951.2,761.1 1051.2,856.7 897.9,957.4 798.0,861.7"/>
<polygon points="989.4,759.1 1087.3,856.3 927.4,959.4 829.6,862.0"/>
<polygon points="1027.7,757.2 1123.5,856.0 956.9,961.3 861.2,862.3"/>
<polygon points="1065.9,755.2 1159.7,855.7 986.4,963.3 892.8,862.6"/>
<polygon points="1104.1,753.3 1195.8,855.3 1015.8,965.3 924.3,863.0"/>
<polygon points="1142.3,751.3 1232.0,855.0 1045.3,967.3 955.9,863.3"/>
<polygon points="1180.6,749.4 1268.2,854.7 1074.8,969.2 987.5,863.6"/>
<polygon points="1218.8,747.4 1304.3,854.3 1104.2,971.2 1019.1,863.9"/>
<polygon points="1257.0,745.5 1340.5,854.0 1133.7,973.2 1050.7,864.2"/>
<polygon points="1295.2,743.6 1376.7,853.7 1163.2,975.2 1082.3,864.5"/>
<polygon points="1333.4,741.6 1412.8,853.3 1192.7,977.2 1113.9,864.8"/>
<polygon points="1371.7,739.7 1449.0,853.0 1222.2,979.1 1145.5,865.1"/>
<polygon points="1409.9,737.7 1485.2,852.7 1251.6,981.1 1177.1,865.4"/>
<polygon points="1448.1,735.8 1521.3,852.3 1281.1,983.1 1208.6,865.8"/>
<polygon points="1486.3,733.8 1557.5,852.0 1310.6,985.1 1240.2,866.1"/>
<polygon points="1524.6,731.9 1593.7,851.7 1340.0,987.0 1271.8,866.4"/>
<polygon points="1562.8,729.9 1629.8,851.3 1369.5,989.0 1303.4,866.7"/>
<polygon points="1601.0,728.0 1666.0,851.0 1399.0,991.0 1335.0,867.0"/>
</g>
<g fill="none" stroke="#ff50ff" stroke-width="1.5">
<polygon points="225,798 364,863 337.9,919.8 197.8,855.8"/>
<polygon points="1601,728 1666,851 1399,991 1335,867"/>
<line x1="280.9" y1="858.8" x2="1499.8" y2="858.8"/>
</g>
<g fill="#ff50ff">
<rect x="220.2" y="793" width="9.6" height="9.6"/>
<rect x="193" y="851" width="9.6" height="9.6"/>
<rect x="359.2" y="858.4" width="9.6" height="9.6"/>
<rect x="333.1" y="915" width="9.6" height="9.6"/>
<rect x="276.1" y="854" width="9.6" height="9.6"/>
<rect x="1596.1" y="723.1" width="9.6" height="9.6"/>
<rect x="1661.1" y="846.1" width="9.6" height="9.6"/>
<rect x="1330.2" y="862" width="9.6" height="9.6"/>
<rect x="1394.1" y="986" width="9.6" height="9.6"/>
<rect x="1495" y="853.9" width="9.6" height="9.6"/>
</g>
<g>
<circle cx="235.5" cy="841.9" r="6.8" fill="#fff" stroke="#ff50ff" stroke-width="1.3"/><circle cx="235.5" cy="841.9" r="2.9" fill="#ff50ff"/><circle cx="238.3" cy="835.6" r="6.3" fill="#fff" stroke="#ff50ff" stroke-width="1.3"/><circle cx="238.3" cy="835.6" r="2.9" fill="#ff50ff"/><circle cx="326.3" cy="875.3" r="6.3" fill="#fff" stroke="#ff50ff" stroke-width="1.3"/><circle cx="326.3" cy="875.3" r="2.9" fill="#ff50ff"/><circle cx="323.5" cy="882.2" r="6.3" fill="#fff" stroke="#ff50ff" stroke-width="1.3"/><circle cx="323.5" cy="882.2" r="2.9" fill="#ff50ff"/><circle cx="1589.2" cy="765.9" r="6.3" fill="#fff" stroke="#ff50ff" stroke-width="1.3"/><circle cx="1589.2" cy="765.9" r="2.9" fill="#ff50ff"/><circle cx="1627.3" cy="838.8" r="6.3" fill="#fff" stroke="#ff50ff" stroke-width="1.3"/><circle cx="1627.3" cy="838.8" r="2.9" fill="#ff50ff"/><circle cx="1373.1" cy="879" r="6.3" fill="#fff" stroke="#ff50ff" stroke-width="1.3"/><circle cx="1373.1" cy="879" r="2.9" fill="#ff50ff"/><circle cx="1411.1" cy="951.8" r="6.3" fill="#fff" stroke="#ff50ff" stroke-width="1.3"/><circle cx="1411.1" cy="951.8" r="2.9" fill="#ff50ff"/>
</g>
</svg>

<div class="a" style="left:216px;top:334px;width:696px;height:381.5px;border-radius:10px 10px 9px 9px;box-shadow:0 0 0 1px rgba(0,0,0,0.22),0 34px 72px rgba(0,0,0,0.45),0 0 22px rgba(0,0,0,0.08);background:#535353;overflow:hidden">
  <div class="a" style="left:0;top:0;width:696px;height:44.3px;background:linear-gradient(#cfcfcf,#b5b5b5);border-top:1px solid #ebebeb;border-bottom:1px solid #8f8f8f"></div>
  <span class="t" style="-webkit-text-stroke:0.3px currentColor;left:262px;top:11px;font-size:25.5px;color:#2b2b2b;letter-spacing:0.75px">Blend Options</span>
  <span class="t" style="-webkit-text-stroke:0.3px currentColor;left:72px;top:100px;font-size:25px;color:#cbcbcb;letter-spacing:0px">Spacing:</span>
  <div class="a" style="left:177px;top:89px;width:289px;height:40px;background:#454545;border:1.5px solid #5f5f5f;border-radius:5px"></div>
  <span class="t" style="-webkit-text-stroke:0.3px currentColor;left:190px;top:100px;font-size:25px;color:#f4f4f4;letter-spacing:0.1px">Specified Steps</span>
  <svg class="a" style="left:438px;top:103px" width="18" height="12"><path d="M2 2 L9 9 L16 2" fill="none" stroke="#efefef" stroke-width="2"/></svg>
  <div class="a" style="left:487px;top:89px;width:178.5px;height:40px;background:#454545;border:1.5px solid #5f5f5f;border-radius:5px"></div>
  <span class="t" style="-webkit-text-stroke:0.3px currentColor;left:497px;top:100px;font-size:25px;color:#f4f4f4">35</span>
  <span class="t" style="-webkit-text-stroke:0.3px currentColor;left:30px;top:187px;font-size:25px;color:#cbcbcb;letter-spacing:0.95px">Orientation:</span>
  <div class="a" style="left:176.6px;top:174.2px;width:168.8px;height:51px;border:1.3px solid #5f5f5f;border-radius:5px"></div>
  <div class="a" style="left:177.9px;top:176px;width:81.5px;height:47.7px;background:#2f2f2f;border-radius:4px 0 0 0"></div>
  <div class="a" style="left:259.3px;top:176px;width:1.3px;height:48px;background:#5f5f5f"></div>
  <div class="a" style="left:180px;top:224px;width:79.8px;height:2px;background:#4d9ef5"></div>
  <svg class="a" style="left:0;top:-1px" width="696" height="382" viewBox="216 333 696 382">
    <path d="M409.7 538.3 Q433.8 522.5 458.5 538.3" fill="none" stroke="#fff" stroke-width="1.3"/>
    <g fill="#fff">
      <rect x="406" y="530.4" width="4" height="15.3" rx="0.8"/>
      <rect x="418" y="524.1" width="3.7" height="15.6" rx="0.8"/>
      <rect x="432" y="522" width="3.9" height="15.6" rx="0.8"/>
      <rect x="445.9" y="524.1" width="3.7" height="15.6" rx="0.8"/>
      <rect x="458.2" y="530.4" width="4" height="15.3" rx="0.8"/>
    </g>
    <path d="M495.8 538.8 Q519.9 522.5 545.1 538.8" fill="none" stroke="#c6c6c6" stroke-width="1.6"/>
    <g stroke="#c6c6c6" stroke-width="4">
      <path d="M489.3 536.1 L498 545.3"/>
      <path d="M503.5 526.2 L508.5 538.4"/>
      <path d="M520 522.3 L520 537.3"/>
      <path d="M536.8 526.2 L531.9 538.4"/>
      <path d="M551.1 536.1 L542.3 545.3"/>
    </g>
    <rect x="248" y="615.8" width="23.8" height="24" rx="3.2" fill="#c8c8c8"/>
    <path d="M252.8 627.4 L258.8 633.6 L267.6 623.3" fill="none" stroke="#525252" stroke-width="3"/>
  </svg>
  <span class="t" style="-webkit-text-stroke:0.3px currentColor;left:64.5px;top:283.5px;font-size:25px;color:#f4f4f4;letter-spacing:0.1px">Preview</span>
  <div class="a" style="left:288.5px;top:270px;width:183px;height:52px;border:2px solid #f2f2f2;border-radius:26px"></div>
  <span class="t" style="-webkit-text-stroke:0.3px currentColor;left:341px;top:285px;font-size:25.5px;color:#f4f4f4;letter-spacing:-0.1px">Cancel</span>
  <div class="a" style="left:482px;top:270px;width:184px;height:52px;border:3.5px solid #fdfdfd;border-radius:26px"></div>
  <span class="t" style="-webkit-text-stroke:0.3px currentColor;left:555.5px;top:284px;font-size:26px;color:#f8f8f8">OK</span>
</div>
</body></html>
